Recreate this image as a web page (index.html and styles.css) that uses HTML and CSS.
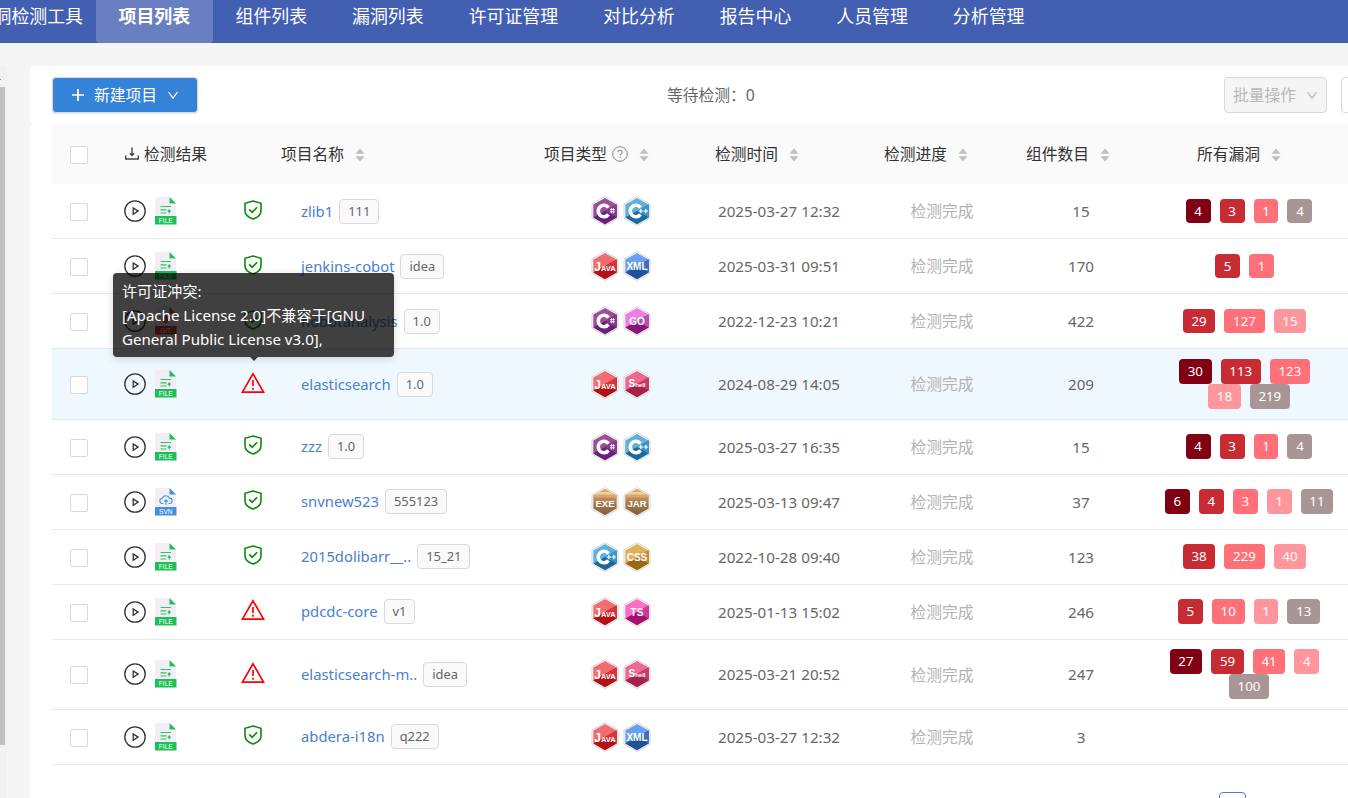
FILE: index.html
```html
<!DOCTYPE html>
<html lang="zh-CN">

<head>
    <meta charset="UTF-8">
    <meta name="viewport" content="width=device-width, initial-scale=1.0">
    <title>项目列表</title>
    <link rel="stylesheet" href="styles.css">
</head>

<body>
    <!-- Shared icons -->
    <svg class="sprite" width="0" height="0">
        <linearGradient id="boxFill" x1="0" y1="0" x2="0" y2="1">
            <stop offset="0.35" stop-color="#b98d5f" />
            <stop offset="1" stop-color="#7f5c38" />
        </linearGradient>
        <symbol id="play" viewBox="0 0 22 22">
            <circle cx="11" cy="11" r="10.2" fill="none" stroke="#333" stroke-width="1.3" />
            <path d="M9.200 7.900v6.400l4.900-3.200z" fill="none" stroke="#333" stroke-width="1.3" />
        </symbol>
        <symbol id="page" viewBox="0 0 22 28">
            <path d="M0 0h14.5v6.5H21V20H0z" fill="#f3eef6" />
            <path d="M14.5 0 21 6.5h-6.5z" fill="currentColor" />
            <path d="M0 19h21.5v8.5H0z" fill="currentColor" />
        </symbol>
        <symbol id="lines" viewBox="0 0 22 28">
            <path d="M5.5 9.5H16M5.5 12.800h6M5.5 16h6M14.2 16.5v-3.500M12.7 14.600l1.5-1.6 1.5 1.6" fill="none" stroke="#2dc464" stroke-width="1.2" />
        </symbol>
        <symbol id="shield" viewBox="0 0 18 20">
            <path d="M9 1 17 3.3v7.4c0 4.4-3.6 6.8-8 8.3-4.4-1.5-8-3.9-8-8.3V3.3z" fill="none" stroke="#0b8a0b" stroke-width="1.6" />
            <path d="m5.2 9.4 3 3 4.9-5.2" fill="none" stroke="#0b8a0b" stroke-width="1.6" />
        </symbol>
        <symbol id="warn" viewBox="0 0 24 22">
            <path d="M12 1.8 22.6 20.2H1.400z" fill="none" stroke="#f00" stroke-width="1.7" />
            <path d="M12 8v6M12 15.8v1.9" stroke="#f00" stroke-width="1.7" />
        </symbol>
        <symbol id="sort" viewBox="0 0 10 14">
            <path d="M5 .5 9.5 5.7h-9zM5 13.5 9.5 8.3h-9z" fill="#bfbfbf" />
        </symbol>
        <symbol id="down" viewBox="0 0 12 12">
            <path d="m1.5 3 4.500 6.200L10.500 3" fill="none" stroke="currentColor" stroke-width="1.2" />
        </symbol>
        <symbol id="hex" viewBox="0 0 28 30">
            <path d="M14 .6 27 8v14.2L14 29.5 1 22.2V8z" fill="#fff" stroke="#d4d4d4" />
            <path class="hex-top" d="M14 2 25.7 8.6v12.9L14 28.2 2.300 21.5V8.6z" />
            <path class="hex-low" d="M2.3 21.5 25.7 8.6v12.9L14 28.2z" />
            <path class="hex-side" d="M25.7 8.6v12.9L14 15z" />
        </symbol>
        <symbol id="box" viewBox="0 0 28 30">
            <path d="M14 .6 27 8v14.2L14 29.5 1 22.2V8z" fill="#fff" stroke="#d4d4d4" />
            <path d="M14 2 25.7 8.6v12.9L14 28.2 2.3 21.5V8.6z" fill="url(#boxFill)" />
            <path d="M14 2 25.7 8.6v1.9H2.3V8.6z" fill="#e0a56b" />
            <path d="M8.5 5.1h11l4 2.3h-19z" fill="#ead3a0" />
        </symbol>
        <symbol id="csharp" viewBox="0 0 28 30">
            <use href="#hex" />
            <path d="M17.5 11.6a5.7 5.7 0 1 0 0 6.8" fill="none" stroke="#fff" stroke-width="3.6" />
            <path d="M20.4 12v5.4M22.4 12v5.4M19 13.6h5M19 15.8h5" stroke="#fff" stroke-width=".8" />
        </symbol>
        <symbol id="cpp" viewBox="0 0 28 30">
            <use href="#hex" />
            <path d="M17.5 11.6a5.7 5.7 0 1 0 0 6.8" fill="none" stroke="#fff" stroke-width="3.6" />
            <path d="M15.5 15h4.6M17.8 12.7v4.6M20.6 15h4.6M22.9 12.7v4.6" stroke="#fff" stroke-width="1.2" />
        </symbol>
        <symbol id="java" viewBox="0 0 28 30">
            <use href="#hex" />
            <text class="lang-text" x="14" y="19.5" font-size="7.5"><tspan font-size="12">J</tspan>AVA</text>
        </symbol>
        <symbol id="shell" viewBox="0 0 28 30">
            <use href="#hex" />
            <text class="lang-text" x="14" y="18" font-size="6"><tspan font-size="10">S</tspan>hell</text>
        </symbol>
        <symbol id="file" viewBox="0 0 22 28">
            <use href="#page" />
            <use href="#lines" />
            <text class="file-text" x="10.8" y="25.700">FILE</text>
        </symbol>
    </svg>

    <nav class="navbar">
        <a class="nav-item first">洞检测工具</a>
        <a class="nav-item active">项目列表</a>
        <a class="nav-item">组件列表</a>
        <a class="nav-item">漏洞列表</a>
        <a class="nav-item">许可证管理</a>
        <a class="nav-item">对比分析</a>
        <a class="nav-item">报告中心</a>
        <a class="nav-item">人员管理</a>
        <a class="nav-item">分析管理</a>
    </nav>

    <div class="main">
        <div class="side-scroll">
            <div class="side-arrow"></div>
            <div class="side-thumb"></div>
        </div>

        <div class="content">
            <div class="toolbar">
                <button class="btn-new">
                    <svg width="14" height="14" viewBox="0 0 14 14"><path d="M7 1v12M1 7h12" stroke="#fff" stroke-width="1.7" /></svg>
                    <span>新建项目</span>
                    <svg width="12" height="12"><use href="#down" /></svg>
                </button>
                <div class="waiting">等待检测：<span>0</span></div>
                <button class="btn-batch">
                    <span>批量操作</span>
                    <svg width="12" height="12"><use href="#down" /></svg>
                </button>
                <div class="btn-next"></div>
            </div>

            <div class="list">
                <table class="project-table">
                    <colgroup>
                        <col class="col-check">
                        <col class="col-result">
                        <col class="col-status">
                        <col class="col-name">
                        <col class="col-type">
                        <col class="col-time">
                        <col class="col-progress">
                        <col class="col-count">
                        <col class="col-bugs">
                    </colgroup>
                    <thead>
                        <tr>
                            <th><div class="checkbox"></div></th>
                            <th colspan="2"><div class="th-inner th-result"><svg width="14" height="14" viewBox="0 0 14 14"><path d="M.7 8.5V12h12.6V8.5M7 .5v7.8M4.8 6.3 7 8.5l2.2-2.2" fill="none" stroke="#444" stroke-width="1.4" /></svg>检测结果</div></th>
                            <th><div class="th-inner">项目名称<svg class="sorter"><use href="#sort" /></svg></div></th>
                            <th><div class="th-inner th-type">项目类型<svg class="help" viewBox="0 0 16 16"><circle cx="8" cy="8" r="7.3" fill="none" stroke="#888" /><path d="M5.9 6.3c0-2.7 4.3-2.6 4.3 0 0 1.6-2.1 1.5-2.1 3.2M8.1 10.8v1.3" fill="none" stroke="#888" stroke-width="1.1" /></svg><svg class="sorter"><use href="#sort" /></svg></div></th>
                            <th><div class="th-inner th-time">检测时间<svg class="sorter"><use href="#sort" /></svg></div></th>
                            <th><div class="th-inner th-progress">检测进度<svg class="sorter"><use href="#sort" /></svg></div></th>
                            <th><div class="th-inner th-count">组件数目<svg class="sorter"><use href="#sort" /></svg></div></th>
                            <th><div class="th-inner th-bugs">所有漏洞<svg class="sorter"><use href="#sort" /></svg></div></th>
                        </tr>
                    </thead>
                    <tbody>
                        <tr>
                            <td><div class="checkbox"></div></td>
                            <td><div class="actions"><svg class="play"><use href="#play" /></svg><svg class="file"><use href="#file" /></svg></div></td>
                            <td class="status"><svg class="shield"><use href="#shield" /></svg></td>
                            <td><div class="name"><a>zlib1</a><span class="version">111</span></div></td>
                            <td><div class="langs"><svg class="lang csharp"><use href="#csharp" /></svg><svg class="lang cpp"><use href="#cpp" /></svg></div></td>
                            <td class="time">2025-03-27 12:32</td>
                            <td class="progress">检测完成</td>
                            <td class="count">15</td>
                            <td><div class="bugs"><span class="bug fatal">4</span><span class="bug high">3</span><span class="bug medium">1</span><span class="bug none">4</span></div></td>
                        </tr>
                        <tr>
                            <td><div class="checkbox"></div></td>
                            <td><div class="actions"><svg class="play"><use href="#play" /></svg><svg class="file"><use href="#file" /></svg></div></td>
                            <td class="status"><svg class="shield"><use href="#shield" /></svg></td>
                            <td><div class="name"><a>jenkins-cobot</a><span class="version">idea</span></div></td>
                            <td><div class="langs"><svg class="lang java"><use href="#java" /></svg><svg class="lang xml" viewBox="0 0 28 30"><use href="#hex" /><text class="lang-text" x="14" y="18.7" font-size="10">XML</text></svg></div></td>
                            <td class="time">2025-03-31 09:51</td>
                            <td class="progress">检测完成</td>
                            <td class="count">170</td>
                            <td><div class="bugs"><span class="bug high">5</span><span class="bug medium">1</span></div></td>
                        </tr>
                        <tr>
                            <td><div class="checkbox"></div></td>
                            <td><div class="actions"><svg class="play"><use href="#play" /></svg><svg class="file git" viewBox="0 0 22 28"><use href="#page" /><path d="m10.500 8 4.500 4.500-4.500 4.500L6 12.500z" fill="currentColor" /><text class="file-text" x="10.8" y="25.7">GIT</text></svg></div></td>
                            <td class="status"><svg class="shield"><use href="#shield" /></svg></td>
                            <td><div class="name"><a>nobotanalysis</a><span class="version">1.0</span></div></td>
                            <td><div class="langs"><svg class="lang csharp"><use href="#csharp" /></svg><svg class="lang go" viewBox="0 0 28 30"><use href="#hex" /><text class="lang-text" x="14" y="18.7" font-size="10">GO</text></svg></div></td>
                            <td class="time">2022-12-23 10:21</td>
                            <td class="progress">检测完成</td>
                            <td class="count">422</td>
                            <td><div class="bugs"><span class="bug high">29</span><span class="bug medium">127</span><span class="bug low">15</span></div></td>
                        </tr>
                        <tr class="hovered">
                            <td><div class="checkbox"></div></td>
                            <td><div class="actions"><svg class="play"><use href="#play" /></svg><svg class="file"><use href="#file" /></svg></div></td>
                            <td class="status"><svg class="warn"><use href="#warn" /></svg>
                                <div class="tooltip">许可证冲突:<br>[Apache License 2.0]不兼容于[GNU<br>General Public License v3.0],</div>
                            </td>
                            <td><div class="name"><a>elasticsearch</a><span class="version">1.0</span></div></td>
                            <td><div class="langs"><svg class="lang java"><use href="#java" /></svg><svg class="lang shell"><use href="#shell" /></svg></div></td>
                            <td class="time">2024-08-29 14:05</td>
                            <td class="progress">检测完成</td>
                            <td class="count">209</td>
                            <td><div class="bugs"><span class="bug fatal">30</span><span class="bug high">113</span><span class="bug medium">123</span><span class="bug low">18</span><span class="bug none">219</span></div></td>
                        </tr>
                        <tr>
                            <td><div class="checkbox"></div></td>
                            <td><div class="actions"><svg class="play"><use href="#play" /></svg><svg class="file"><use href="#file" /></svg></div></td>
                            <td class="status"><svg class="shield"><use href="#shield" /></svg></td>
                            <td><div class="name"><a>zzz</a><span class="version">1.0</span></div></td>
                            <td><div class="langs"><svg class="lang csharp"><use href="#csharp" /></svg><svg class="lang cpp"><use href="#cpp" /></svg></div></td>
                            <td class="time">2025-03-27 16:35</td>
                            <td class="progress">检测完成</td>
                            <td class="count">15</td>
                            <td><div class="bugs"><span class="bug fatal">4</span><span class="bug high">3</span><span class="bug medium">1</span><span class="bug none">4</span></div></td>
                        </tr>
                        <tr>
                            <td><div class="checkbox"></div></td>
                            <td><div class="actions"><svg class="play"><use href="#play" /></svg><svg class="file svn" viewBox="0 0 22 28"><use href="#page" /><path d="M8.3 15.5H7.6a2.6 2.6 0 0 1-.3-5.2 3.7 3.7 0 0 1 7-.2 2.7 2.7 0 0 1 .3 5.4h-1M11 17v-5M9.2 13.6 11 11.8l1.8 1.8" fill="none" stroke="currentColor" stroke-width="1.1" /><text class="file-text" x="10.8" y="25.7">SVN</text></svg></div></td>
                            <td class="status"><svg class="shield"><use href="#shield" /></svg></td>
                            <td><div class="name"><a>snvnew523</a><span class="version">555123</span></div></td>
                            <td><div class="langs"><svg class="lang" viewBox="0 0 28 30"><use href="#box" /><text class="lang-text" x="14" y="19.5" font-size="9.5">EXE</text></svg><svg class="lang" viewBox="0 0 28 30"><use href="#box" /><text class="lang-text" x="14" y="19.5" font-size="9.5">JAR</text></svg></div></td>
                            <td class="time">2025-03-13 09:47</td>
                            <td class="progress">检测完成</td>
                            <td class="count">37</td>
                            <td><div class="bugs"><span class="bug fatal">6</span><span class="bug high">4</span><span class="bug medium">3</span><span class="bug low">1</span><span class="bug none">11</span></div></td>
                        </tr>
                        <tr>
                            <td><div class="checkbox"></div></td>
                            <td><div class="actions"><svg class="play"><use href="#play" /></svg><svg class="file"><use href="#file" /></svg></div></td>
                            <td class="status"><svg class="shield"><use href="#shield" /></svg></td>
                            <td><div class="name"><a>2015dolibarr__..</a><span class="version">15_21</span></div></td>
                            <td><div class="langs"><svg class="lang cpp"><use href="#cpp" /></svg><svg class="lang css" viewBox="0 0 28 30"><use href="#hex" /><text class="lang-text" x="14" y="18.7" font-size="10">CSS</text></svg></div></td>
                            <td class="time">2022-10-28 09:40</td>
                            <td class="progress">检测完成</td>
                            <td class="count">123</td>
                            <td><div class="bugs"><span class="bug high">38</span><span class="bug medium">229</span><span class="bug low">40</span></div></td>
                        </tr>
                        <tr>
                            <td><div class="checkbox"></div></td>
                            <td><div class="actions"><svg class="play"><use href="#play" /></svg><svg class="file"><use href="#file" /></svg></div></td>
                            <td class="status"><svg class="warn"><use href="#warn" /></svg></td>
                            <td><div class="name"><a>pdcdc-core</a><span class="version">v1</span></div></td>
                            <td><div class="langs"><svg class="lang java"><use href="#java" /></svg><svg class="lang ts" viewBox="0 0 28 30"><use href="#hex" /><text class="lang-text" x="14" y="18.7" font-size="10">TS</text></svg></div></td>
                            <td class="time">2025-01-13 15:02</td>
                            <td class="progress">检测完成</td>
                            <td class="count">246</td>
                            <td><div class="bugs"><span class="bug high">5</span><span class="bug medium">10</span><span class="bug low">1</span><span class="bug none">13</span></div></td>
                        </tr>
                        <tr class="tall">
                            <td><div class="checkbox"></div></td>
                            <td><div class="actions"><svg class="play"><use href="#play" /></svg><svg class="file"><use href="#file" /></svg></div></td>
                            <td class="status"><svg class="warn"><use href="#warn" /></svg></td>
                            <td><div class="name"><a>elasticsearch-m..</a><span class="version">idea</span></div></td>
                            <td><div class="langs"><svg class="lang java"><use href="#java" /></svg><svg class="lang shell"><use href="#shell" /></svg></div></td>
                            <td class="time">2025-03-21 20:52</td>
                            <td class="progress">检测完成</td>
                            <td class="count">247</td>
                            <td><div class="bugs"><span class="bug fatal">27</span><span class="bug high">59</span><span class="bug medium">41</span><span class="bug low">4</span><span class="bug none">100</span></div></td>
                        </tr>
                        <tr>
                            <td><div class="checkbox"></div></td>
                            <td><div class="actions"><svg class="play"><use href="#play" /></svg><svg class="file"><use href="#file" /></svg></div></td>
                            <td class="status"><svg class="shield"><use href="#shield" /></svg></td>
                            <td><div class="name"><a>abdera-i18n</a><span class="version">q222</span></div></td>
                            <td><div class="langs"><svg class="lang java"><use href="#java" /></svg><svg class="lang xml" viewBox="0 0 28 30"><use href="#hex" /><text class="lang-text" x="14" y="18.7" font-size="10">XML</text></svg></div></td>
                            <td class="time">2025-03-27 12:32</td>
                            <td class="progress">检测完成</td>
                            <td class="count">3</td>
                            <td></td>
                        </tr>
                    </tbody>
                </table>
                <div class="pagination">
                    <div class="page-current"></div>
                </div>
            </div>
        </div>
    </div>
</body>

</html>
```
FILE: styles.css
```css
* {
    box-sizing: border-box;
}

body {
    margin: 0;
    height: 798px;
    overflow: hidden;
    background-color: #f5f5f5;
    color: #666;
    font-family: "Noto Sans", "Noto Sans CJK SC", sans-serif;
    font-size: 15.75px;
}

svg {
    display: block;
    flex: none;
}

.sprite {
    position: absolute;
}

/* Navbar */
.navbar {
    display: flex;
    height: 43px;
    background-color: #435fb2;
}

.nav-item {
    flex: none;
    padding: 0 22.5px;
    font-size: 17.9px;
    line-height: 32px;
    color: #fff;
    white-space: nowrap;
}

.nav-item.first {
    width: 96px;
    padding: 0 13px 0 0;
    display: flex;
    justify-content: flex-end;
}

.nav-item.active {
    width: 117px;
    background-color: #6a7fc1;
    border-radius: 0 0 4px 4px;
    font-weight: bold;
}

/* Page body */
.main {
    display: flex;
    height: 755px;
    padding-top: 23px;
}

.side-scroll {
    flex: none;
    width: 7px;
    margin-right: 23px;
    background-color: #f1f1f1;
}

.side-arrow {
    height: 21px;
    padding-top: 13px;
}

.side-arrow::before {
    content: "";
    display: block;
    width: 1px;
    height: 1px;
    background-color: #888;
}

.side-thumb {
    width: 5px;
    height: 658px;
    background-color: #c1c1c1;
}

.content {
    flex: none;
    width: 1335px;
}

.toolbar {
    display: flex;
    align-items: center;
    height: 58px;
    padding-left: 22px;
    background-color: #fff;
    border-radius: 4px;
}

.btn-new,
.btn-batch {
    display: flex;
    flex: none;
    align-items: center;
    height: 36px;
    font-family: inherit;
    font-size: 15.75px;
    border-radius: 4px;
}

.btn-new span,
.btn-batch span {
    margin-top: -1px;
}

.btn-new {
    width: 146px;
    padding: 0 0 0 18px;
    gap: 10px;
    color: #fff;
    background-color: #3583d8;
    border: 1px solid #d9d9d9;
    box-shadow: 0 1px 2px rgba(0, 0, 0, 0.1);
}

.btn-new span {
    margin-left: -1px;
}

.waiting {
    flex: none;
    width: 557px;
    margin: -2px 0 0 469px;
}

.btn-batch {
    width: 103px;
    padding: 0 0 0 8px;
    gap: 10px;
    color: #b8b8b8;
    background-color: #f5f5f5;
    border: 1px solid #d9d9d9;
}

.btn-next {
    flex: none;
    width: 40px;
    height: 36px;
    margin-left: 14px;
    border: 1px solid #d9d9d9;
    border-radius: 4px;
}

.list {
    height: 674px;
    padding-left: 22px;
    background-color: #fff;
    border-radius: 4px 0 0 0;
}

/* Table */
.project-table {
    width: 1313px;
    table-layout: fixed;
    border-spacing: 0;
}

.col-check { width: 54px; }
.col-result { width: 120px; }
.col-status { width: 55px; }
.col-name { width: 259px; }
.col-type { width: 163px; }
.col-time { width: 152px; }
.col-progress { width: 174px; }
.col-count { width: 104px; }
.col-bugs { width: 232px; }

th {
    height: 60px;
    padding: 0;
    font-weight: normal;
    color: #333;
    background-color: #fafafa;
}

td {
    height: 55px;
    padding: 0;
    border-bottom: 1px solid #e8e8e8;
}

/* rows under the hovered one sit slightly higher */
.hovered ~ tr td {
    padding-bottom: 1px;
}

.th-inner {
    display: flex;
    align-items: center;
    margin-top: -1px;
    white-space: nowrap;
}

.th-result {
    padding-left: 19px;
    gap: 5px;
}

.th-type { padding-left: 4px; }
.th-time { padding-left: 12px; }
.th-progress { padding-left: 29px; }
.th-count { margin-left: -3px; }
.th-bugs { padding-left: 64px; }

.sorter {
    width: 10px;
    height: 14px;
    margin: 3px 0 0 11px;
}

.help {
    width: 16px;
    height: 16px;
    margin-left: 5px;
}

.help + .sorter {
    margin-left: 11px;
}

.checkbox {
    width: 18px;
    height: 18px;
    margin: 2px 0 0 18px;
    background-color: #fff;
    border: 1px solid #d9d9d9;
    border-radius: 2px;
}

.actions {
    display: flex;
    align-items: center;
    gap: 9px;
    padding-left: 18px;
}

.play {
    width: 22px;
    height: 22px;
}

.file {
    width: 22px;
    height: 28px;
    color: #1fbf58;
}

.git { color: #e0452f; }
.svn { color: #4490dc; }

.file-text {
    fill: #fff;
    font-family: "Liberation Sans", sans-serif;
    font-size: 6.6px;
    text-anchor: middle;
}

.status {
    position: relative;
    padding-right: 1px;
}

.shield {
    width: 18px;
    height: 20px;
    margin: -3px auto 0;
}

.warn {
    width: 24px;
    height: 22px;
    margin: -3px auto 0;
}

.name {
    display: flex;
    align-items: center;
    padding-left: 20px;
    gap: 6px;
    white-space: nowrap;
}

.name a {
    margin-top: -1px;
    font-size: 14.8px;
    color: #4a80d0;
}

.version {
    height: 25px;
    padding: 0 8px;
    font-size: 12.9px;
    line-height: 23px;
    background-color: #fafafa;
    border: 1px solid #d9d9d9;
    border-radius: 4px;
}

.time,
.count {
    padding-bottom: 1px;
    font-size: 15.2px;
    text-align: center;
}

.progress {
    padding-bottom: 1px;
    color: #b3b3b3;
    text-align: center;
}

.hovered td {
    height: 71px;
    background-color: #f0f8ff;
}

.tall td {
    height: 70px;
}

/* Languages */
.langs {
    display: flex;
    justify-content: center;
    gap: 3.5px;
    padding-right: 1.5px;
}

.lang {
    width: 28px;
    height: 30px;
}

.lang-text {
    fill: #fff;
    font-family: "Liberation Sans", sans-serif;
    font-weight: bold;
    text-anchor: middle;
}

.hex-top { fill: var(--top); }
.hex-low { fill: var(--low); }
.hex-side { fill: var(--side); }

.csharp { --top: #9b4f96; --low: #68217a; --side: #843b8c; }
.cpp { --top: #5fb0de; --low: #1d6a98; --side: #3a92cb; }
.java { --top: #f26d6f; --low: #b01217; --side: #d8353a; }
.xml { --top: #6b9ff0; --low: #20529c; --side: #3b6fbd; }
.go { --top: #ea80e2; --low: #85187c; --side: #b951b1; }
.shell { --top: #ec6991; --low: #a5234b; --side: #c63c66; }
.css { --top: #e0b15c; --low: #9b680f; --side: #c48d30; }
.ts { --top: #f66fc5; --low: #a5106f; --side: #d0389a; }

/* Vulnerability counters */
.bugs {
    display: flex;
    flex-wrap: wrap;
    justify-content: center;
    width: 174px;
    margin: 0 auto;
}

.bug {
    height: 24.75px;
    margin-right: 9px;
    padding: 0 8.7px;
    font-size: 13.3px;
    line-height: 25px;
    color: #fff;
    border-radius: 4px;
}

.fatal { background-color: #800014; }
.high { background-color: #c72c35; }
.medium { background-color: #ff7078; }
.low { background-color: #ff969d; }

.none {
    margin-right: 0;
    background-color: #a89595;
}

/* Tooltip */
.tooltip {
    position: absolute;
    left: 50%;
    bottom: 62px;
    z-index: 10;
    width: 281px;
    height: 84px;
    margin-left: -140.5px;
    padding: 6px 9px;
    font-size: 15.1px;
    line-height: 24px;
    color: #fff;
    white-space: nowrap;
    background-color: rgba(0, 0, 0, 0.75);
    border-radius: 4px;
    box-shadow: 0 2px 8px rgba(0, 0, 0, 0.15);
}

.tooltip::after {
    content: "";
    position: absolute;
    left: 50%;
    top: 100%;
    margin-left: -4px;
    border: 4px solid transparent;
    border-top-color: rgba(0, 0, 0, 0.75);
}

.pagination {
    display: flex;
    padding: 27px 0 0 1167px;
}

.page-current {
    width: 27px;
    height: 27px;
    border: 1px solid #4a80d0;
    border-radius: 4px;
}
```
